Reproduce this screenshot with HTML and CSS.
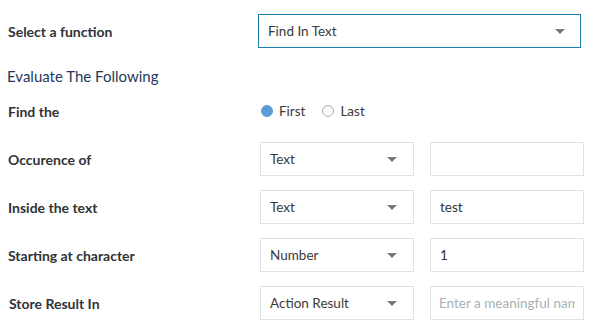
FILE: index.html
```html
<!DOCTYPE html>
<html lang="en">
<head>
    <meta charset="UTF-8" />
    <title>Find In Text</title>
    <link rel="stylesheet" href="styles.css">
</head>
<body>
<form class="fn-form">
    <div class="row">
        <label class="row-label">Select a function</label>
        <div class="dropdown dropdown-wide active">
            <span>Find In Text</span>
            <span class="caret"></span>
        </div>
    </div>

    <div class="section-title">Evaluate The Following</div>

    <div class="row">
        <label class="row-label">Find the</label>
        <div class="radio-group">
            <span class="radio checked"></span><span class="radio-text">First</span>
            <span class="radio"></span><span class="radio-text">Last</span>
        </div>
    </div>

    <div class="row">
        <label class="row-label">Occurence of</label>
        <div class="pair">
            <div class="dropdown"><span>Text</span><span class="caret"></span></div>
            <div class="text-box"></div>
        </div>
    </div>

    <div class="row">
        <label class="row-label">Inside the text</label>
        <div class="pair">
            <div class="dropdown"><span>Text</span><span class="caret"></span></div>
            <div class="text-box"><span class="value">test</span></div>
        </div>
    </div>

    <div class="row">
        <label class="row-label">Starting at character</label>
        <div class="pair">
            <div class="dropdown"><span>Number</span><span class="caret"></span></div>
            <div class="text-box"><span class="value">1</span></div>
        </div>
    </div>

    <div class="row">
        <label class="row-label label-shift">Store Result In</label>
        <div class="pair">
            <div class="dropdown"><span>Action Result</span><span class="caret"></span></div>
            <div class="text-box placeholder"><span class="value">Enter a meaningful name</span></div>
        </div>
    </div>
</form>
</body>
</html>
```

FILE: styles.css
```css
body {
    margin: 0;
    font-family: 'Lato', 'Open Sans', sans-serif;
    background-color: #ffffff;
    color: #333;
}

.fn-form {
    padding: 14px 0 0 8px;
    display: flex;
    flex-direction: column;
    gap: 14px;
}

.row {
    display: flex;
    align-items: center;
    height: 34px;
}

.row-label {
    box-sizing: border-box;
    width: 251px;
    flex-shrink: 0;
    font-size: 14px;
    font-weight: bold;
    color: #2f3337;
}

.label-shift {
    padding-left: 1px;
}

.section-title {
    font-size: 15px;
    color: #24395a;
    margin: 4px 0 -6px -1px;
    line-height: 20px;
}

.dropdown {
    box-sizing: border-box;
    height: 34px;
    width: 154px;
    border: 1px solid #dde2e6;
    display: flex;
    align-items: center;
    justify-content: space-between;
    padding: 0 16px 0 9px;
    font-size: 13.5px;
    color: #3a3a3a;
}

.dropdown-wide {
    width: 323px;
    margin-left: -1px;
    padding-right: 15px;
}

.dropdown.active {
    border-color: #1b7eb0;
}

.caret {
    width: 0;
    height: 0;
    border-left: 5px solid transparent;
    border-right: 5px solid transparent;
    border-top: 5px solid #7a7a7a;
}

.pair {
    display: flex;
    gap: 16px;
    margin-left: 1px;
}

.text-box {
    box-sizing: border-box;
    height: 34px;
    width: 154px;
    border: 1px solid #dde2e6;
    display: flex;
    align-items: center;
    padding: 0 8px 0 9px;
    font-size: 13.5px;
    color: #333;
}

.value {
    white-space: nowrap;
    overflow: hidden;
}

.placeholder {
    color: #aab0b5;
    padding-left: 8px;
}

.radio-group {
    display: flex;
    align-items: center;
    margin-left: 2px;
}

.radio {
    box-sizing: border-box;
    width: 12px;
    height: 12px;
    border-radius: 50%;
    border: 1.5px solid #a3adb6;
    margin-right: 6px;
}

.radio.checked {
    background-color: #5b9bd6;
    border-color: #5b9bd6;
}

.radio-text {
    font-size: 13.5px;
    color: #3a3a3a;
    margin-right: 17px;
}
```
